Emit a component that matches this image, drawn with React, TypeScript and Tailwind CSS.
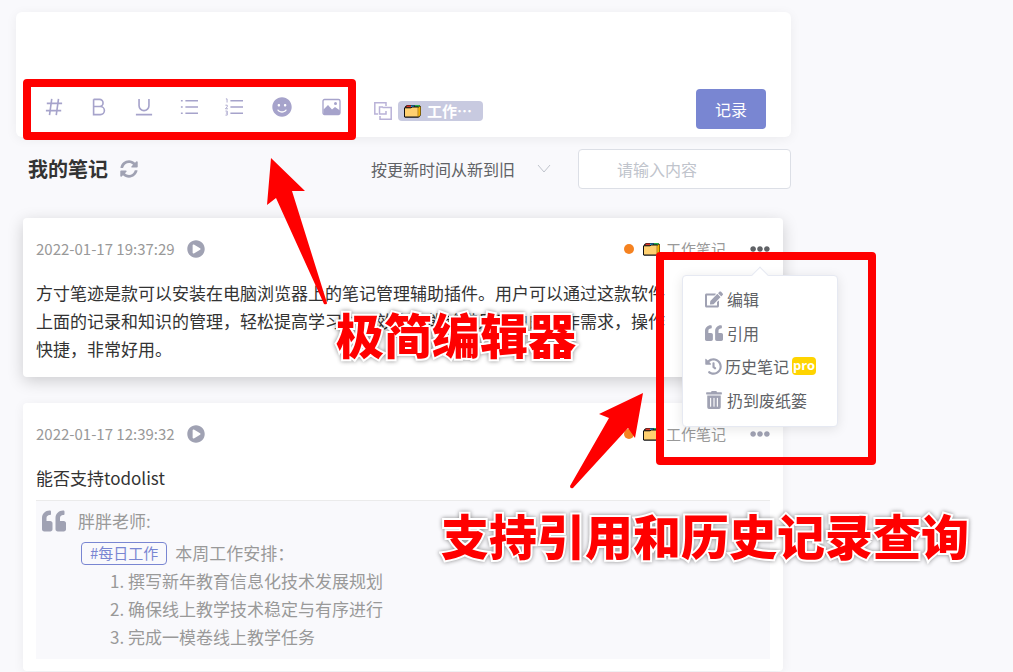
import { FaSyncAlt, FaPlayCircle, FaEllipsisH, FaQuoteLeft, FaHistory, FaEdit, FaTrashAlt, FaSmile } from 'react-icons/fa'

const FolderIcon = () => (
   <svg className="w-5 h-4 shrink-0" viewBox="0 0 20 16" fill="none">
      <path d="M2 3.500 4 2h12l2 1.500V12l-2 2.500H2z" fill="#111" />
      <path d="M4 2.500h4v2H3z" fill="#d8342b" />
      <path d="M8 2.500h4l-1 1.500H8z" fill="#2d9be0" />
      <path d="M12 2h4.500v1.800H12z" fill="#24b04b" />
      <path d="M15.500 4 17.500 3.500v8.500l-2 2z" fill="#f5b400" />
      <path d="M1.500 4.800h6.500l1.500-.8h5.800V14H1.500z" fill="#ffd070" stroke="#111" />
      <path d="M15.300 4.500V13.500" stroke="#f0ae20" strokeWidth="1.200" />
   </svg>
)

const tools = [
   {
      name: '标签',
      icon: <path d="M7.500 1 5 19M15 1l-2.500 18M2 6h17M1 14h17" />,
   },
   {
      name: '加粗',
      icon: <path d="M4 1.500v17h7.500a4.300 4.300 0 0 0 0-9H4M4 1.500h6.500a4 4 0 0 1 0 8" />,
   },
   {
      name: '下划线',
      icon: <path d="M4.500 1v7.500a5.500 5.500 0 0 0 11 0V1M1 18.500h18" />,
   },
   {
      name: '无序列表',
      icon: <path d="M1 3h2M1 10h2M1 17h2M6 3h14M6 10h14M6 17h14" />,
   },
]

const Toolbar = () => (
   <div className="flex items-center mb-1">
      <div className="flex gap-[27px]">
         {tools.map(tool => (
            <button key={tool.name} aria-label={tool.name}>
               <svg
                  className="w-[18px] h-[18px]"
                  viewBox="0 0 20 20"
                  fill="none"
                  stroke="#a6a3cb"
                  strokeWidth="1.800"
               >
                  {tool.icon}
               </svg>
            </button>
         ))}
         <button aria-label="有序列表">
            <svg className="w-[18px] h-[18px]" viewBox="0 0 20 20" fill="none" stroke="#a6a3cb">
               <path strokeWidth="1.800" d="M6 3h14M6 10h14M6 17h14" />
               <path d="M1 1h1.300v4M.5 8h2v1.800L.5 12h2.800M.5 14.500h2v4.500h-2M1 16.700h1.500" />
            </svg>
         </button>
      </div>
      <button aria-label="表情" className="ml-[29px]">
         <FaSmile className="w-5 h-5 text-[#a6a3cb]" />
      </button>
      <button aria-label="图片" className="ml-[30px]">
         <svg className="w-[19px] h-[18px]" viewBox="0 0 19 18">
            <rect x="1" y="1.500" width="17" height="15" rx="1.500" fill="none" stroke="#a6a3cb" strokeWidth="1.300" />
            <path d="M1.500 11.500 6 7l4 4.500 3-2.500 5 3.500v3.500H1.500z" fill="#a6a3cb" />
            <circle cx="13.500" cy="5.500" r="1.500" fill="#a6a3cb" />
         </svg>
      </button>
   </div>
)

const Editor = () => (
   <section className="bg-white rounded-md shadow-[0_2px_12px_rgba(0,0,0,0.06)]">
      <textarea aria-label="笔记内容" className="block w-full h-[69px] resize-none outline-none px-4 py-2" />
      <div className="flex items-center h-14 pl-[29px] pr-[25px]">
         <Toolbar />
         <button aria-label="复制" className="ml-8 mt-1">
            <svg className="w-5 h-5" viewBox="0 0 20 20" fill="none" stroke="#b9b2d8" strokeWidth="1.500">
               <path d="M5 13H1.800V1.800H13V5M10 6h-3.500v7H13v-3M9.500 6.500H18.200V18.200H7V15" />
            </svg>
         </button>
         <button className="ml-[5px] mt-1 flex items-center gap-1 h-5 w-[85px] pl-[5px] rounded-sm bg-[#c8cae0] text-white text-[15px] leading-5 font-bold whitespace-nowrap">
            <FolderIcon />
            工作⋯
         </button>
         <button className="ml-auto w-[70px] h-10 rounded-sm bg-[#7986d2] text-white text-base">记录</button>
      </div>
   </section>
)

const Filters = () => (
   <div className="flex items-center h-10 mt-3 pl-3">
      <h1 className="text-xl font-bold text-[#333]">我的笔记</h1>
      <button aria-label="刷新" className="ml-3">
         <FaSyncAlt className="w-[18px] h-[18px] text-[#a0a2b3]" />
      </button>
      <div className="relative ml-auto w-[180px] mr-[27px]">
         <select aria-label="排序" className="appearance-none w-full outline-none text-base text-[#606266]">
            <option>按更新时间从新到旧</option>
         </select>
         <svg className="absolute right-0 top-1.5 w-3.5 h-3 pointer-events-none" viewBox="0 0 14 12" fill="none" stroke="#c0c4cc">
            <path d="m1 2 6 7 6-7" />
         </svg>
      </div>
      <input
         aria-label="搜索"
         placeholder="请输入内容"
         className="w-[213px] h-10 pl-[38px] rounded-sm border border-[#dcdfe6] bg-white text-base placeholder:text-[#c0c4cc] outline-none"
      />
   </div>
)

const Menu = () => (
   <div className="absolute z-10 right-[-55px] top-[57px] w-[156px] h-[152px] rounded-sm border border-[#e6e9f2] bg-white shadow-[0_2px_12px_rgba(0,0,0,0.1)] pl-[22px] pt-1.5 text-base text-[#606266]">
      <span className="absolute -top-[7px] left-[71px] w-3 h-3 rotate-45 border-l border-t border-[#e6e9f2] bg-white" />
      <button className="flex items-center gap-1 h-[34px]">
         <FaEdit className="w-[18px] h-[17px] text-[#a0a2b3]" />
         编辑
      </button>
      <button className="flex items-center gap-1 h-[34px]">
         <FaQuoteLeft className="w-[18px] h-[18px] text-[#a0a2b3]" />
         引用
      </button>
      <button className="flex items-center gap-[3px] h-8">
         <FaHistory className="w-[17px] h-[17px] text-[#a0a2b3]" />
         历史笔记
         <span className="h-[18px] w-6 rounded-sm bg-[#ffd400] text-center text-white text-[13px] leading-4 font-bold font-['Open_Sans']">
            pro
         </span>
      </button>
      <button className="flex items-center gap-1 h-9">
         <FaTrashAlt className="w-[18px] h-[18px] text-[#a0a2b3]" />
         扔到废纸篓
      </button>
   </div>
)

const NoteHeader = ({ date, active = false }) => (
   <header className="flex items-center h-6 text-[15px] text-[#999]">
      <time>{date}</time>
      <button aria-label="播放" className="ml-3">
         <FaPlayCircle className="w-[18px] h-[18px] text-[#a0a2b3]" />
      </button>
      <span className="ml-auto w-2.5 h-2.5 rounded-full bg-[#f58220]" />
      <span className="ml-2 flex items-center gap-1">
         <FolderIcon />
         工作笔记
      </span>
      <button aria-label="更多" className="ml-6">
         <FaEllipsisH className={active ? 'w-5 h-5 text-[#606266]' : 'w-5 h-5 text-[#a0a2b3]'} />
      </button>
   </header>
)

const Annotations = () => (
   <div className="absolute inset-0 z-20 pointer-events-none">
      <div className="absolute left-[23px] top-[79px] w-[333px] h-[61px] rounded-sm border-8 border-[#f00]" />
      <div className="absolute left-[656px] top-[252px] w-[220px] h-[213px] rounded-sm border-8 border-[#f00]" />
      <svg className="absolute left-[266px] top-[157px] w-[63px] h-[149px]" viewBox="0 0 63 149" fill="#f00">
         <path d="M5 1 39 34 26 34 61 146Q61 148 58 147L10 41 1 48z" />
      </svg>
      <svg className="absolute left-[568px] top-[391px] w-[78px] h-[99px]" viewBox="0 0 78 99" fill="#f00">
         <path d="M75 2 67 47 60 37 5 97Q2 98 2 95L41 27 31 23z" />
      </svg>
      <p className="absolute left-[336px] top-[297px] text-5xl leading-[72px] font-black text-[#f00] whitespace-nowrap [-webkit-text-stroke:4px_white] [paint-order:stroke_fill] drop-shadow-[0_0_2px_rgba(0,0,0,0.45)]">
         极简编辑器
      </p>
      <p className="absolute left-[441px] top-[498px] text-5xl leading-[72px] font-black text-[#f00] whitespace-nowrap [-webkit-text-stroke:4px_white] [paint-order:stroke_fill] drop-shadow-[0_0_2px_rgba(0,0,0,0.45)]">
         支持引用和历史记录查询
      </p>
   </div>
)

const App = () => {
   return (
      <div
         lang="zh-CN"
         className="relative min-h-screen overflow-hidden bg-[#f9f9fc] pl-4 pt-3 font-['Noto_Sans_CJK_SC',sans-serif]"
      >
         <main className="w-full max-w-[775px]">
            <Editor />
            <Filters />
            <div className="mt-[29px] pl-[7px] pr-2 text-[17px] leading-7 text-[#333]">
               <article className="relative rounded-sm bg-white shadow-[0_4px_16px_rgba(0,0,0,0.18)] px-[13px] pt-[19px] pb-[14px]">
                  <NoteHeader date="2022-01-17 19:37:29" active />
                  <p className="mt-[18px] max-w-[630px]">
                     方寸笔迹是款可以安装在电脑浏览器上的笔记管理辅助插件。用户可以通过这款软件上面的记录和知识的管理，轻松提高学习办公效率，能够满足用户的工作需求，操作快捷，非常好用。
                  </p>
                  <Menu />
               </article>
               <article className="mt-[26px] rounded-sm bg-white shadow-[0_2px_12px_rgba(0,0,0,0.06)] px-[13px] pt-[19px] pb-3">
                  <NoteHeader date="2022-01-17 12:39:32" />
                  <p className="mt-[18px]">能否支持todolist</p>
                  <blockquote className="mt-2 border-t border-[#ebebeb] bg-[#f9f9fc] pt-[6px] pb-2 pl-[6px] flex text-[#999]">
                     <FaQuoteLeft className="mt-0.5 w-6 h-6 shrink-0 text-[#a0a2b3]" />
                     <div className="ml-3">
                        <p>胖胖老师:</p>
                        <p className="mt-1 pl-[3px] flex items-center gap-2">
                           <a
                              href="#daily"
                              className="h-[23px] px-2 rounded-sm border border-[#7986d2] text-[15px] leading-5 text-[#7986d2]"
                           >
                              #每日工作
                           </a>
                           本周工作安排：
                        </p>
                        <ol className="list-decimal pl-[50px]">
                           <li>撰写新年教育信息化技术发展规划</li>
                           <li>确保线上教学技术稳定与有序进行</li>
                           <li>完成一模卷线上教学任务</li>
                        </ol>
                     </div>
                  </blockquote>
               </article>
            </div>
         </main>
         <Annotations />
      </div>
   )
}

export default App
